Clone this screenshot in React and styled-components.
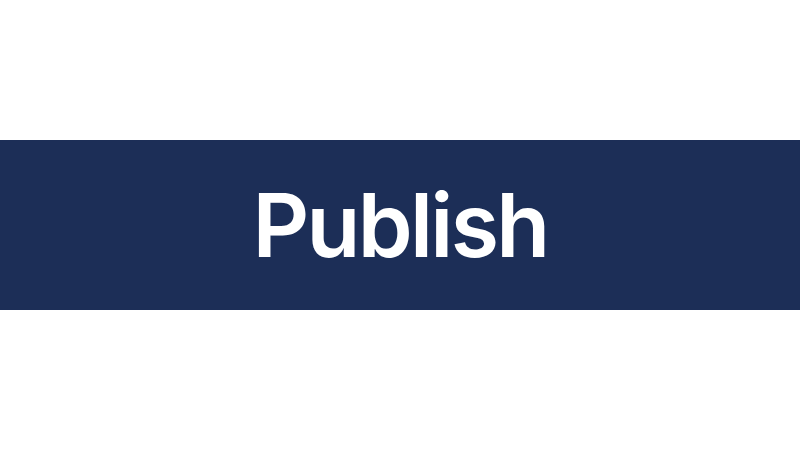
import React from "react";
import styled, { createGlobalStyle } from "styled-components";

const GlobalStyle = createGlobalStyle`
  html, body {
    margin: 0;
    padding: 0;
    background: #ffffff;
  }
  body {
    font-family: Inter, "Liberation Sans", sans-serif;
  }
`;

const Page = styled.div`
  width: 800px;
  height: 450px;
  display: flex;
  flex-direction: column;
  justify-content: center;
`;

const Banner = styled.div`
  height: 170px;
  background-color: #1c2e57;
  display: flex;
  align-items: center;
  justify-content: center;
`;

const Title = styled.h1`
  margin: 0;
  color: #ffffff;
  font-family: Inter, "Liberation Sans", sans-serif;
  font-weight: 600;
  font-size: 88px;
  line-height: 1;
  letter-spacing: -2.7px;
`;

export default function App() {
  return (
    <>
      <GlobalStyle />
      <Page>
        <Banner>
          <Title>Publish</Title>
        </Banner>
      </Page>
    </>
  );
}
